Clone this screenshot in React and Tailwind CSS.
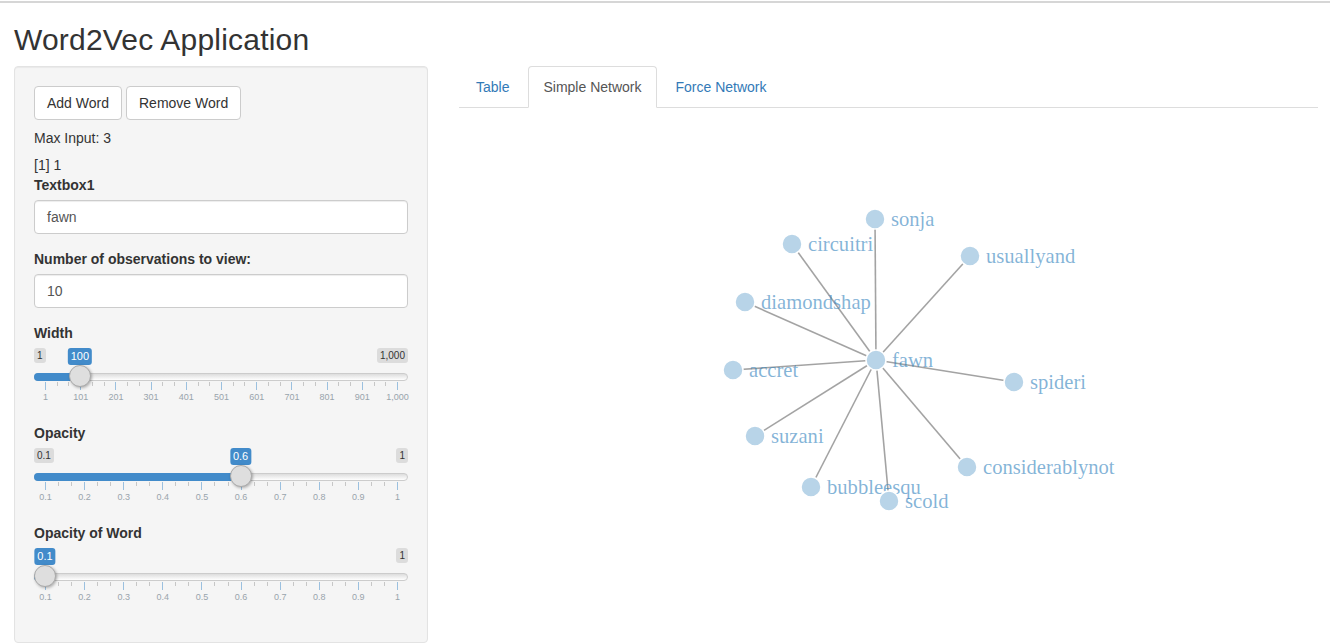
import React from "react";

const L = 11;
const R = 363;

function Slider({ min, max, value, labels, minLabel, maxLabel, valueLabel, showMin = true }) {
  const pos = L + ((value - min) / (max - min)) * (R - L);
  const n = labels.length - 1;
  const step = (R - L) / n;
  const majors = labels.map((_, i) => L + i * step);
  const minors = [];
  for (let i = 0; i < n; i++) {
    minors.push(L + i * step + step / 3);
    minors.push(L + i * step + (2 * step) / 3);
  }
  return (
    <div className="relative h-[60px] w-full select-none">
      {showMin && (
        <span className="absolute left-0 top-0 rounded-[3px] bg-black/10 px-[3px] py-[1px] text-[10px] leading-[13.33px] text-[#333]">
          {minLabel}
        </span>
      )}
      <span className="absolute right-0 top-0 rounded-[3px] bg-black/10 px-[3px] py-[1px] text-[10px] leading-[13.33px] text-[#333]">
        {maxLabel}
      </span>
      <span
        className="absolute top-0 -translate-x-1/2 rounded-[3px] bg-[#428bca] px-[3px] py-[1px] text-[11px] leading-[14.67px] text-white"
        style={{ left: pos }}
      >
        {valueLabel}
      </span>
      <div className="absolute left-0 right-0 top-[25px] h-[8px] rounded-[16px] border border-[#ccc] bg-[linear-gradient(to_bottom,#dddddd,#ffffff)]" />
      <div
        className="absolute left-0 top-[25px] h-[8px] rounded-l-[16px] bg-[#428bca]"
        style={{ width: pos }}
      />
      {majors.map((x, i) => (
        <div
          key={"M" + i}
          className="absolute top-[34px] h-[8px] w-px bg-[#428bca] opacity-50"
          style={{ left: x }}
        />
      ))}
      {minors.map((x, i) => (
        <div
          key={"m" + i}
          className="absolute top-[34px] h-[4px] w-px bg-[#999] opacity-50"
          style={{ left: x }}
        />
      ))}
      {labels.map((t, i) => (
        <span
          key={"t" + i}
          className="absolute top-[45px] -translate-x-1/2 whitespace-nowrap text-[9px] leading-[9px] text-[#99a4ac]"
          style={{ left: majors[i] + 0.5 }}
        >
          {t}
        </span>
      ))}
      <div
        className="absolute top-[17px] h-[22px] w-[22px] -translate-x-1/2 rounded-full border border-[#aaa] bg-[#dedede] shadow-[1px_1px_3px_rgba(0,0,0,0.3)]"
        style={{ left: pos }}
      />
    </div>
  );
}

const nodes = [
  { n: "fawn", x: 876, y: 360 },
  { n: "sonja", x: 875, y: 219 },
  { n: "circuitri", x: 792, y: 244 },
  { n: "usuallyand", x: 970, y: 256 },
  { n: "diamondshap", x: 745, y: 302 },
  { n: "accret", x: 733, y: 370 },
  { n: "spideri", x: 1014, y: 382 },
  { n: "suzani", x: 755, y: 436 },
  { n: "considerablynot", x: 967, y: 467 },
  { n: "bubbleesqu", x: 811, y: 487 },
  { n: "scold", x: 889, y: 501 },
];

function Network() {
  const c = nodes[0];
  return (
    <svg className="block h-[535px] w-full" viewBox="459 108 859 535" preserveAspectRatio="xMinYMin meet">
      <g>
        {nodes.slice(1).map((d) => (
          <line
            key={"l" + d.n}
            x1={c.x}
            y1={c.y}
            x2={d.x}
            y2={d.y}
            stroke="#666"
            strokeOpacity="0.6"
            strokeWidth="1.6"
          />
        ))}
      </g>
      {nodes.map((d) => (
        <g key={d.n}>
          <circle cx={d.x} cy={d.y} r="10" fill="#b8d4e8" stroke="#fff" strokeWidth="1.5" />
          <text
            x={d.x + 16}
            y={d.y + 7}
            fill="#3182bd"
            fillOpacity="0.6"
            fontFamily="'Liberation Serif', 'Times New Roman', serif"
            fontSize="20.6"
          >
            {d.n}
          </text>
        </g>
      ))}
    </svg>
  );
}

export default function App() {
  const widthLabels = ["1", "101", "201", "301", "401", "501", "601", "701", "801", "901", "1,000"];
  const opLabels = ["0.1", "0.2", "0.3", "0.4", "0.5", "0.6", "0.7", "0.8", "0.9", "1"];
  return (
    <div className="min-h-screen bg-white font-['Liberation_Sans',Arial,sans-serif] text-[14px] leading-[20px] text-[#333]">
      <div className="h-[3px] pt-[1px]">
        <div className="h-[2px] bg-[#d6d6d6]" />
      </div>
      <div className="pl-[14px] pr-[12px]">
        <h2 className="mb-[10px] mt-[20px] text-[30px] font-normal leading-[33px] tracking-[0.2px] text-[#333]">
          Word2Vec Application
        </h2>
        <div className="flex">
          <div className="w-[414px] shrink-0">
            <div className="rounded-[4px] border border-[#e3e3e3] bg-[#f5f5f5] p-[19px] shadow-[inset_0_1px_1px_rgba(0,0,0,0.05)]">
              <div className="flex gap-[4px]">
                <button className="h-[34px] rounded-[4px] border border-[#ccc] bg-white px-[12px] text-[14px] leading-[20px] text-[#333]">
                  Add Word
                </button>
                <button className="h-[34px] rounded-[4px] border border-[#ccc] bg-white px-[12px] text-[14px] leading-[20px] text-[#333]">
                  Remove Word
                </button>
              </div>
              <div className="mt-[8px]">Max Input: 3</div>
              <div className="mt-[7px]">[1] 1</div>
              <div className="mb-[15px]">
                <label className="mb-[5px] block font-bold">Textbox1</label>
                <div className="flex h-[34px] items-center rounded-[4px] border border-[#ccc] bg-white px-[12px] text-[#555] shadow-[inset_0_1px_1px_rgba(0,0,0,0.075)]">
                  fawn
                </div>
              </div>
              <div className="mb-[15px]">
                <label className="mb-[5px] block font-bold">Number of observations to view:</label>
                <div className="flex h-[34px] items-center rounded-[4px] border border-[#ccc] bg-white px-[12px] text-[#555] shadow-[inset_0_1px_1px_rgba(0,0,0,0.075)]">
                  10
                </div>
              </div>
              <div className="mb-[15px]">
                <label className="mb-[5px] block font-bold">Width</label>
                <Slider min={1} max={1000} value={100} labels={widthLabels} minLabel="1" maxLabel="1,000" valueLabel="100" />
              </div>
              <div className="mb-[15px]">
                <label className="mb-[5px] block font-bold">Opacity</label>
                <Slider min={0.1} max={1} value={0.6} labels={opLabels} minLabel="0.1" maxLabel="1" valueLabel="0.6" />
              </div>
              <div className="mb-[15px]">
                <label className="mb-[5px] block font-bold">Opacity of Word</label>
                <Slider min={0.1} max={1} value={0.1} labels={opLabels} minLabel="0.1" maxLabel="1" valueLabel="0.1" showMin={false} />
              </div>
            </div>
          </div>
          <div className="ml-[31px] min-w-0 flex-1">
            <ul className="flex border-b border-[#ddd]">
              <li className="-mb-px">
                <a className="mr-[2px] block rounded-t-[4px] border border-transparent px-[16px] py-[10px] leading-[20px] text-[#337ab7]">
                  Table
                </a>
              </li>
              <li className="-mb-px">
                <a className="mr-[2px] block rounded-t-[4px] border border-[#ddd] border-b-transparent bg-white px-[14px] py-[10px] leading-[20px] text-[#555]">
                  Simple Network
                </a>
              </li>
              <li className="-mb-px">
                <a className="mr-[2px] block rounded-t-[4px] border border-transparent px-[16px] py-[10px] leading-[20px] text-[#337ab7]">
                  Force Network
                </a>
              </li>
            </ul>
            <Network />
          </div>
        </div>
      </div>
    </div>
  );
}
